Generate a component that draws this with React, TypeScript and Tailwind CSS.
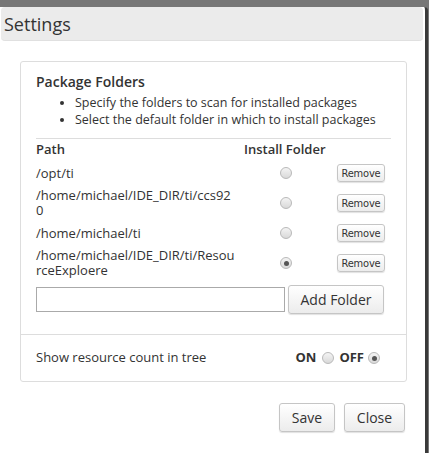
import React from 'react';

const folders = [
  { path: '/opt/ti', selected: false },
  { path: '/home/michael/IDE_DIR/ti/ccs920', selected: false },
  { path: '/home/michael/ti', selected: false },
  { path: '/home/michael/IDE_DIR/ti/ResourceExploere', selected: true },
];

function Radio({ checked }: { checked?: boolean }) {
  return (
    <span className="inline-flex w-[12px] h-[12px] rounded-full border border-[#b9b9b9] bg-gradient-to-b from-[#f4f4f4] to-[#d9d9d9] items-center justify-center">
      {checked && <span className="w-[5px] h-[5px] rounded-full bg-[#555]" />}
    </span>
  );
}

const btn =
  'border border-[#c5c5c5] rounded-[3px] bg-gradient-to-b from-white to-[#ececec] text-[#333] shadow-[0_1px_1px_rgba(0,0,0,0.12)]';

export default function App() {
  return (
    <div className="h-[453px] overflow-hidden bg-[#777] pt-[7px] font-['Open_Sans',sans-serif] text-[#333]">
      <div className="w-[428px] h-[460px] bg-white border-r-[3px] border-[#3a3a3a] rounded-tr-[4px]">
        <div className="ml-[1px] mr-[2px] h-[34px] bg-[#ebebeb] rounded-[4px] border-b border-[#e0e0e0] flex items-center pl-[3px]">
          <span className="text-[18px] leading-none">Settings</span>
        </div>

        <div className="mt-[20px] ml-[20px] w-[387px] border border-[#ddd] rounded-[3px]">
          <div className="px-[15px] pt-[10px]">
            <div className="text-[14px] font-semibold leading-[20px]">Package Folders</div>
            <ul className="list-disc pl-[39px] text-[12.5px] leading-[17px] mt-[2px]">
              <li>Specify the folders to scan for installed packages</li>
              <li>Select the default folder in which to install packages</li>
            </ul>

            <div className="mt-[10px] border-t border-[#ddd]">
              <div className="flex h-[19px] pt-[2px] items-center text-[13px] font-semibold">
                <div className="w-[208px]">Path</div>
                <div className="w-[100px]">Install Folder</div>
              </div>
              {folders.map((f) => (
                <div key={f.path} className="flex h-[30px] items-center text-[13px]">
                  <div className="w-[202px] break-all leading-[15px] mr-[6px]">{f.path}</div>
                  <div className="w-[84px] flex justify-center">
                    <Radio checked={f.selected} />
                  </div>
                  <div className="flex-1 flex justify-end pr-[6px]">
                    <button className={`${btn} h-[18px] w-[48px] text-[11px] leading-none font-['DejaVu_Sans_Condensed','Liberation_Sans_Narrow',sans-serif] tracking-[-0.2px]`}>
                      Remove
                    </button>
                  </div>
                </div>
              ))}
            </div>

            <div className="flex items-center mt-[7px] mb-[20px]">
              <input className="w-[249px] h-[25px] border border-[#aaa] outline-none" />
              <button className={`${btn} ml-[3px] h-[29px] w-[96px] text-[14px]`}>Add Folder</button>
            </div>
          </div>

          <div className="border-t border-[#ddd] flex items-center h-[47px] px-[15px] text-[13px]">
            <span className="flex-1">Show resource count in tree</span>
            <span className="flex items-center mr-[11px]">
              <span className="font-bold mr-[6px]">ON</span>
              <Radio />
              <span className="font-bold ml-[5px] mr-[4px]">OFF</span>
              <Radio checked />
            </span>
          </div>
        </div>

        <div className="flex justify-end gap-[9px] mt-[21px] mr-[20px]">
          <button className={`${btn} h-[29px] w-[56px] text-[14px]`}>Save</button>
          <button className={`${btn} h-[29px] w-[61px] text-[14px]`}>Close</button>
        </div>
      </div>
    </div>
  );
}
